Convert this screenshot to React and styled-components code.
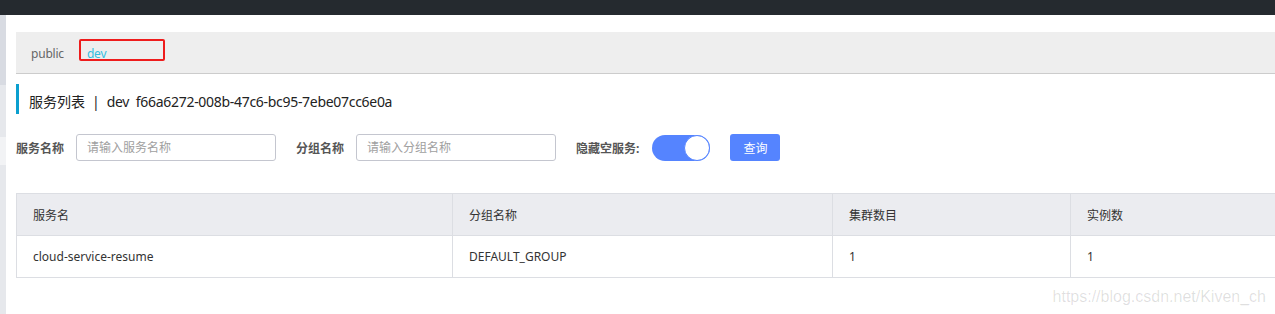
import styled, { createGlobalStyle } from "styled-components";

const Global = createGlobalStyle`
  body {
    margin: 0;
    background: #fff;
    font-family: "Noto Sans", "Noto Sans CJK SC", sans-serif;
    color: #333;
  }
`;

const Page = styled.div`
  position: relative;
  width: 1275px;
  height: 314px;
  overflow: hidden;
  display: flex;
  flex-direction: column;
`;

const TopBar = styled.div`
  height: 15px;
  background: #252a2f;
  flex-shrink: 0;
`;

const Body = styled.div`
  flex: 1;
  display: flex;
`;

const Strip = styled.div`
  width: 6px;
  display: flex;
  flex-direction: column;
`;

const StripPart = styled.div`
  height: ${(p) => p.$h}px;
  flex: ${(p) => (p.$h ? "none" : 1)};
  background: ${(p) => p.$c};
`;

const Main = styled.div`
  flex: 1;
  padding: 17px 0 0 10px;
  position: relative;
`;

const TabBar = styled.div`
  height: 41px;
  background: #eeeeee;
  border-bottom: 1px solid #cccccc;
  display: flex;
  align-items: center;
  padding-left: 15px;
  font-size: 12px;
  position: relative;
`;

const Tab = styled.span`
  color: ${(p) => (p.$active ? "#33bde0" : "#666")};
  line-height: 16px;
  padding-top: 2px;
  letter-spacing: -0.2px;
`;

const TabSep = styled.span`
  width: 1px;
  height: 9px;
  background: #f5c98a;
  margin: 2px 7px 0 15px;
`;

const Mark = styled.div`
  position: absolute;
  left: 63px;
  top: 7px;
  width: 82px;
  height: 18px;
  border: 2px solid #ee1c1c;
  border-radius: 2px;
`;

const Title = styled.div`
  margin-top: 10px;
  height: 30px;
  border-left: 3px solid #0b9fcf;
  padding-left: 10px;
  display: flex;
  align-items: center;
  font-size: 14px;
  color: #222;
  padding-top: 4px;
  box-sizing: border-box;
  white-space: pre;
`;

const Pipe = styled.span`
  margin: 0 7px;
  color: #222;
`;

const Latin = styled.span`
  letter-spacing: -0.3px;
`;

const Form = styled.div`
  margin-top: 20px;
  display: flex;
  align-items: center;
  height: 27px;
`;

const Label = styled.span`
  font-size: 12px;
  font-weight: bold;
  color: #555;
  margin-right: ${(p) => p.$gap || 12}px;
`;

const Input = styled.input`
  width: 200px;
  height: 27px;
  box-sizing: border-box;
  border: 1px solid #c4c6cf;
  border-radius: 3px;
  padding: 0 10px;
  font-size: 12px;
  font-family: inherit;
  margin-right: 20px;
  outline: none;
  &::placeholder {
    color: #a0a0a0;
  }
`;

const Switch = styled.div`
  width: 58px;
  height: 26px;
  border-radius: 13px;
  background: #5584ff;
  display: flex;
  justify-content: flex-end;
  align-items: center;
  margin-right: 20px;
`;

const Knob = styled.div`
  width: 24px;
  height: 24px;
  border-radius: 50%;
  background: #fff;
  border: 1px solid #5584ff;
`;

const Button = styled.button`
  width: 50px;
  height: 27px;
  border: none;
  border-radius: 3px;
  background: #5584ff;
  color: #fff;
  font-size: 12px;
  font-family: inherit;
  padding: 0;
`;

const Table = styled.table`
  margin-top: 32px;
  width: 100%;
  border-collapse: collapse;
  table-layout: fixed;
  font-size: 12px;
  color: #333;
`;

const Th = styled.th`
  height: 42px;
  box-sizing: border-box;
  background: #ebecf0;
  border: 1px solid #dcdee3;
  border-right: ${(p) => (p.$last ? "none" : "1px solid #dcdee3")};
  text-align: left;
  font-weight: normal;
  padding: 0 16px;
  width: ${(p) => (p.$w ? p.$w + "px" : "auto")};
`;

const Td = styled.td`
  height: 42px;
  box-sizing: border-box;
  border: 1px solid #dcdee3;
  border-right: ${(p) => (p.$last ? "none" : "1px solid #dcdee3")};
  padding: 0 16px;
`;

const Watermark = styled.div`
  position: absolute;
  right: 9px;
  bottom: 8px;
  font-family: "Liberation Sans", Arial, sans-serif;
  font-size: 16px;
  color: rgba(0, 0, 0, 0.13);
`;

export default function App() {
  return (
    <Page>
      <Global />
      <TopBar />
      <Body>
        <Strip>
          <StripPart $h={70} $c="#d8dbe2" />
          <StripPart $h={52} $c="#e6e8ec" />
          <StripPart $h={28} $c="#f2f3f5" />
          <StripPart $c="#e6e8ec" />
        </Strip>
        <Main>
          <TabBar>
            <Tab>public</Tab>
            <TabSep />
            <Tab $active>dev</Tab>
            <Mark />
          </TabBar>
          <Title>
            服务列表<Pipe>|</Pipe>
            <Latin>dev  f66a6272-008b-47c6-bc95-7ebe07cc6e0a</Latin>
          </Title>
          <Form>
            <Label>服务名称</Label>
            <Input placeholder="请输入服务名称" />
            <Label>分组名称</Label>
            <Input placeholder="请输入分组名称" />
            <Label $gap={13}>隐藏空服务:</Label>
            <Switch>
              <Knob />
            </Switch>
            <Button>查询</Button>
          </Form>
          <Table>
            <thead>
              <tr>
                <Th $w={436}>服务名</Th>
                <Th $w={380}>分组名称</Th>
                <Th $w={238}>集群数目</Th>
                <Th $last>实例数</Th>
              </tr>
            </thead>
            <tbody>
              <tr>
                <Td>cloud-service-resume</Td>
                <Td>DEFAULT_GROUP</Td>
                <Td>1</Td>
                <Td $last>1</Td>
              </tr>
            </tbody>
          </Table>
        </Main>
      </Body>
      <Watermark>https://blog.csdn.net/Kiven_ch</Watermark>
    </Page>
  );
}
